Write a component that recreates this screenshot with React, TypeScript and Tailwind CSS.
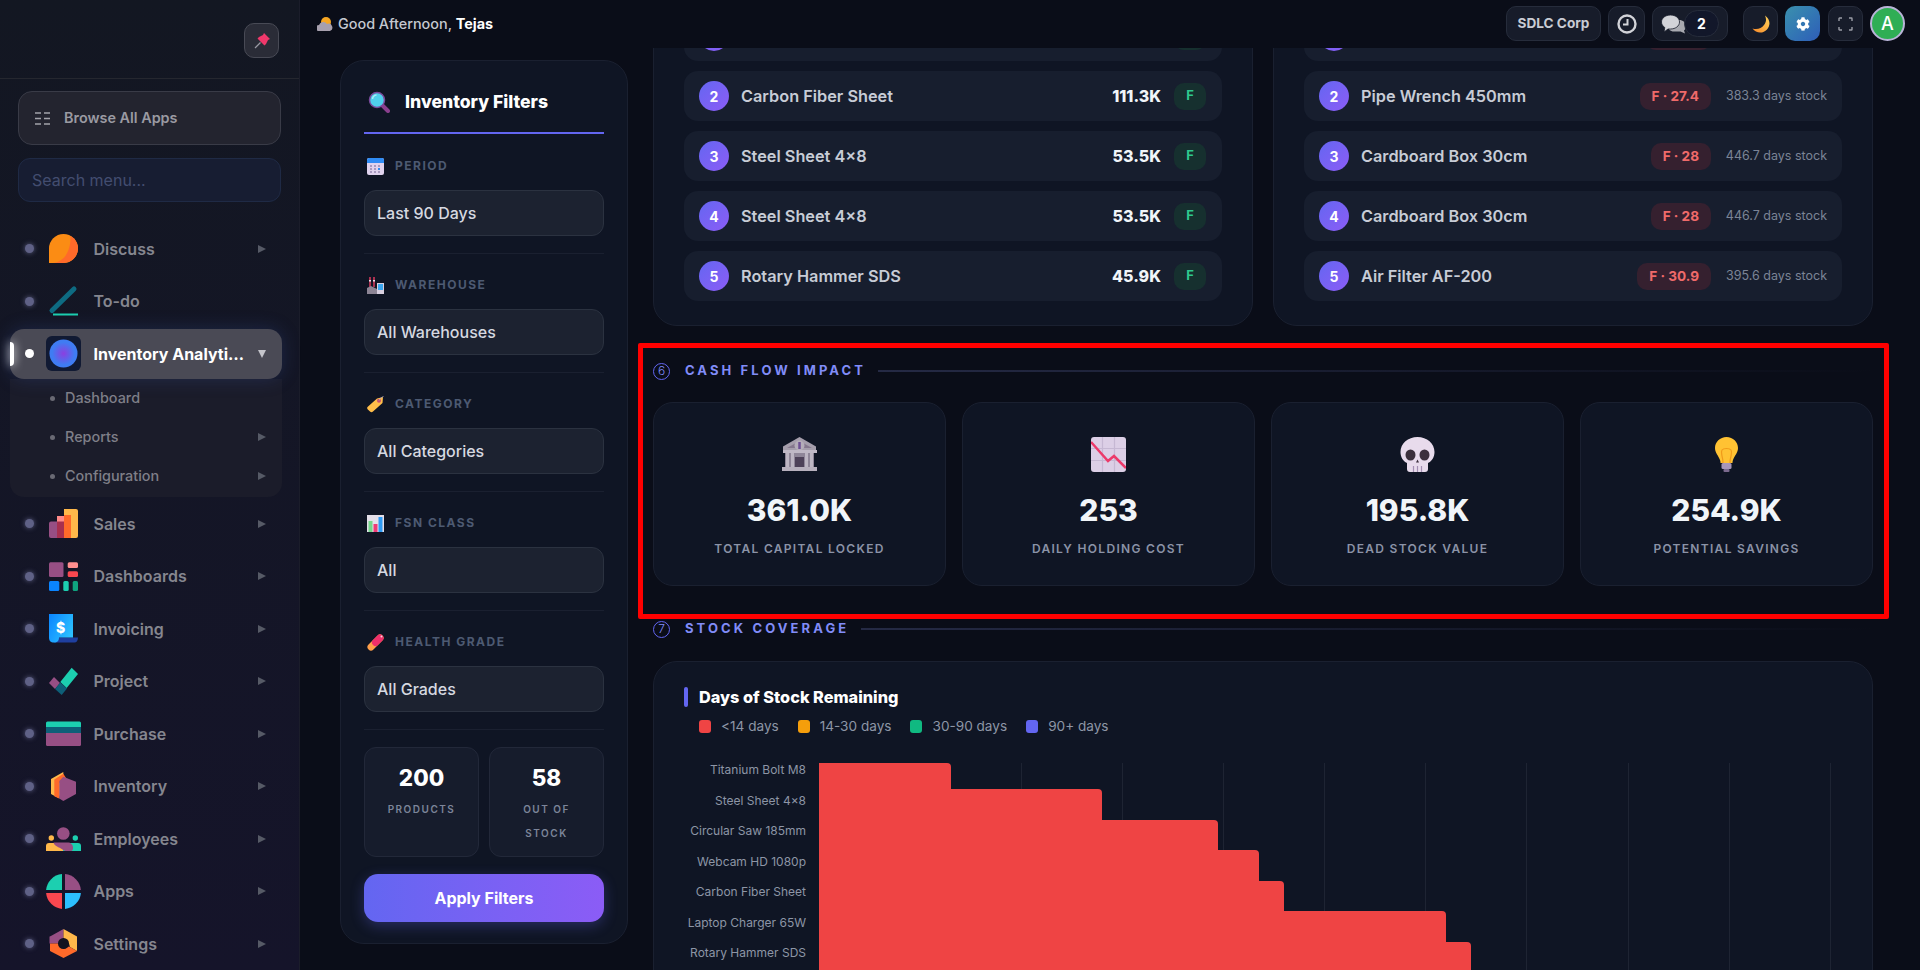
import { ReactNode } from 'react';
import { FaCog } from 'react-icons/fa';

const Svg = ({ s = 35, w, children }: { s?: number; w?: number; children: ReactNode }) => (
  <svg width={w ?? s} height={s} viewBox={`0 0 ${w ?? s} ${s}`} className="shrink-0">
    {children}
  </svg>
);

// app icons, all on a 35 box
const DiscussIcon = () => (
  <Svg>
    <path d="M3 32V17.5A14.5 14.5 0 1 1 17.5 32Z" fill="#fb8c14" />
    <path d="M24.500 4.800A14.5 14.5 0 0 1 17.500 32H7C17 31 25 22 24.500 4.800Z" fill="#ff6a2a" />
  </Svg>
);
const TodoIcon = () => (
  <Svg>
    <path d="M28 5 6 26.500" stroke="#0e6b82" strokeWidth="5" strokeLinecap="round" />
    <path d="M7 30.500H32" stroke="#1ccfb0" strokeWidth="2" />
  </Svg>
);
const AnalyticsIcon = () => (
  <Svg>
    <defs>
      <radialGradient id="ana">
        <stop offset="0" stopColor="#8b3fe0" />
        <stop offset="0.8" stopColor="#3f7cf3" />
      </radialGradient>
    </defs>
    <rect width="35" height="35" rx="6" fill="#111a33" />
    <circle cx="17.500" cy="17.500" r="14" fill="url(#ana)" />
  </Svg>
);
const SalesIcon = () => (
  <Svg>
    <path d="M3 17.500a2 2 0 0 1 2-2h6v16.500H5a2 2 0 0 1-2-2Z" fill="#974f84" />
    <path d="M11 10h7v22h-7Z" fill="#ff8a8a" />
    <path d="M11 15.500h7V32h-7Z" fill="#a8304f" />
    <path d="M18 3h12a2 2 0 0 1 2 2v25a2 2 0 0 1-2 2H18Z" fill="#ffb84a" />
    <path d="M18 9h7v23h-7Z" fill="#ff6a2a" />
  </Svg>
);
const DashboardsIcon = () => (
  <Svg>
    <rect x="3" y="3.300" width="14.500" height="14.700" rx="1.500" fill="#974f84" />
    <rect x="21.700" y="3.300" width="10.300" height="5.700" rx="1.500" fill="#ff8f8f" />
    <rect x="21.700" y="12.300" width="10.300" height="5.700" rx="1.500" fill="#f9474f" />
    <rect x="3" y="22" width="10.300" height="10" rx="1.500" fill="#0a84ff" />
    <rect x="17.300" y="22" width="5.400" height="10" rx="1.500" fill="#1ccfb0" />
    <rect x="26.700" y="22" width="5.300" height="10" rx="1.500" fill="#0fa37f" />
  </Svg>
);
const InvoicingIcon = () => (
  <Svg>
    <defs>
      <linearGradient id="inv" x1="0" y1="0" x2="1" y2="0.600">
        <stop offset="0" stopColor="#0a84ff" />
        <stop offset="1" stopColor="#2cc0ff" />
      </linearGradient>
    </defs>
    <path d="M10 26.500H32c0 3-1.500 5-3.500 5H8Z" fill="#1f3f9f" />
    <path d="M3 3h24v23.500H13c0 3-1.500 5-5 5s-5-2-5-5Z" fill="url(#inv)" />
    <text x="14.500" y="21.500" textAnchor="middle" fontSize="14" fontWeight="800" fill="#fff" fontFamily="Inter, sans-serif">
      $
    </text>
  </Svg>
);
const ProjectIcon = () => (
  <Svg>
    <polygon points="3,19 8,13 14,19 9,25" fill="#974f84" />
    <polygon points="25.700,3.800 32,10 20.600,24 14.300,18" fill="#1ccfb0" />
    <polygon points="14.300,18.500 21,24.500 15.700,31 9,25" fill="#0e5f78" />
  </Svg>
);
const PurchaseIcon = () => (
  <Svg>
    <path d="M0 7a1.500 1.500 0 0 1 1.500-1.500h32A1.500 1.500 0 0 1 35 7v4H0Z" fill="#1ccfb0" />
    <rect y="11" width="35" height="6" fill="#0e5f78" />
    <path d="M0 17h35v11.500a1.500 1.500 0 0 1-1.500 1.500h-32A1.500 1.500 0 0 1 0 28.500Z" fill="#974f84" />
  </Svg>
);
const InventoryIcon = () => (
  <Svg>
    <polygon points="17.300,3 5,10 5,25 13.300,29.500 17.300,8" fill="#ffb84a" />
    <polygon points="17.300,4.800 8.300,10.500 8.300,27.200 13.300,29.500 13.300,14 20,9" fill="#ff6a2a" />
    <polygon points="17.300,7.800 30,12.800 30,25 17.300,32 13.300,29.500 13.300,12" fill="#974f84" />
  </Svg>
);
const EmployeesIcon = () => (
  <Svg>
    <circle cx="17.300" cy="12.500" r="6.300" fill="#974f84" />
    <circle cx="5.300" cy="17" r="2.700" fill="#ffb84a" />
    <circle cx="29.300" cy="17" r="2.700" fill="#1ccfb0" />
    <path d="M0 30v-5a3 3 0 0 1 3-3h15v8Z" fill="#ffb84a" />
    <path d="M35 30v-5a3 3 0 0 0-3-3H17v8Z" fill="#1ccfb0" />
    <path d="M7.500 21.500h15c2 0 4 1.500 4.500 4.500 .3 2-.5 4-2 4H20c-2 0-3.500-2-6-3-2-1-6-2.500-6.500-5.500Z" fill="#974f84" />
  </Svg>
);
const AppsIcon = () => (
  <Svg>
    <path d="M16 0.100V16H0.100A17.500 17.500 0 0 1 16 0.100Z" fill="#1ccfb0" />
    <path d="M19 0.100A17.500 17.500 0 0 1 34.900 16H19Z" fill="#974f84" />
    <path d="M16 19V34.900A17.500 17.500 0 0 1 0.100 19Z" fill="#f9474f" />
    <path d="M19 19H34.900A17.500 17.500 0 0 1 19 34.900Z" fill="#2cc0ff" />
  </Svg>
);
const SettingsIcon = () => (
  <Svg>
    <path d="M17.500 3 4 10.500V17.500H12L17.500 12Z" fill="#974f84" />
    <path d="M17.500 3 31 10.500V25L24 21 23 17.500 17.500 12Z" fill="#ffb84a" />
    <path d="M4 17.500V25L17.500 32 31 25 23 20.500 17.500 23 12 17.500Z" fill="#ff6a2a" />
    <path d="M4 17.500V10.500" stroke="#974f84" />
    <circle cx="17.500" cy="17.500" r="5.500" fill="#12121f" />
  </Svg>
);

// small emoji-like drawings
const Magnifier = () => (
  <Svg s={22}>
    <path d="M14 14 20 20" stroke="#8a3f8e" strokeWidth="4" strokeLinecap="round" />
    <circle cx="9" cy="9" r="7.500" fill="#4fd0ec" stroke="#7a4a9c" strokeWidth="1.500" />
    <path d="M4.500 8a4.500 4.500 0 0 1 4-4" stroke="#a9ecf8" strokeWidth="1.500" fill="none" />
  </Svg>
);
const Calendar = () => (
  <Svg s={17}>
    <rect width="17" height="17" rx="2" fill="#e0d3ee" />
    <path d="M0 5V2a2 2 0 0 1 2-2h13a2 2 0 0 1 2 2v3Z" fill="#2f8cf5" />
    {[3, 7, 11].map(x => [7, 10, 13].map(y => <rect key={`${x}${y}`} x={x} y={y} width="2" height="2" fill={x === 11 && y === 10 ? '#2f8cf5' : '#a99ac0'} />))}
  </Svg>
);
const Factory = () => (
  <Svg s={17}>
    <path d="M2 0h2v10H2ZM6 0h2v10H6Z" fill="#a8304f" />
    <path d="M2 3h2v1.500H2ZM6 3h2v1.500H6Z" fill="#e8dce8" />
    <path d="M0 17v-6l4-2 4 2 2 1v5Z" fill="#8c8494" />
    <rect x="10" y="6" width="7" height="11" fill="#d8d0e0" />
    <rect x="11" y="7" width="5" height="6" fill="#39a6ef" />
  </Svg>
);
const Tag = () => (
  <Svg s={17}>
    <path d="M.5 11 10 2.500l6-1.500-.5 6L6 15.500c-1 1-2 1-3 0L.8 13.500c-.8-.8-.8-1.800-.3-2.500Z" fill="#ffbd4a" />
    <circle cx="12" cy="4.800" r="2" fill="#c8506f" />
    <path d="M12 4.500C13 2 15 1 16.500 .5" stroke="#b0a8c0" strokeWidth=".8" fill="none" />
  </Svg>
);
const BarChart = () => (
  <Svg s={17}>
    <rect width="17" height="17" fill="#e4dfe9" />
    <rect x="1.500" y="6" width="4" height="11" fill="#74d68a" />
    <rect x="6.500" y="9" width="4" height="8" fill="#ef3a76" />
    <rect x="11.500" y="2" width="4" height="15" fill="#2f9cf5" />
  </Svg>
);
const Pill = () => (
  <Svg s={17}>
    <path d="M4 13 13 4" stroke="#ff9f4a" strokeWidth="7" strokeLinecap="round" />
    <path d="M8.500 8.500 13 4" stroke="#ef2f6b" strokeWidth="7" strokeLinecap="round" />
    <circle cx="14.500" cy="2.500" r="1" fill="#ffd0dc" />
  </Svg>
);
const Bank = () => (
  <Svg>
    <path d="M17.500 0 34 9.500V13H1V9.500Z" fill="#a59eac" />
    <path d="M17.500 4 30 11H5Z" fill="#85788e" />
    <circle cx="17.500" cy="8.500" r="5" fill="#b4adb9" />
    <path d="M17.500 5v7" stroke="#6d4f94" strokeWidth="2.500" />
    <rect x="1" y="13" width="34" height="3" fill="#c0b9c6" />
    <rect x="3" y="16" width="29" height="14" fill="#8f8698" />
    {[4, 9, 23, 28].map(x => (
      <rect key={x} x={x} y="16" width="3" height="14" fill="#bdb6c3" />
    ))}
    <rect x="13" y="20" width="9" height="10" fill="#4e4259" />
    <rect y="30" width="35" height="4" fill="#b7b0bd" />
  </Svg>
);
const ChartDown = () => (
  <Svg>
    <rect width="35" height="35" rx="3" fill="#dccfe6" />
    <path d="M0 11.500H35M0 23.500H35M11.500 0V35M23.500 0V35" stroke="#c6b8d3" strokeWidth="1.200" />
    <path d="M0 5 17 24 23 19 35 31" stroke="#ec3a6a" strokeWidth="2.500" fill="none" />
  </Svg>
);
const Skull = () => (
  <Svg>
    <path d="M17.500 0C27 0 34.500 6.500 34.500 15c0 5-2.500 9-6.500 11v6a3 3 0 0 1-3 3H10a3 3 0 0 1-3-3v-6C3 24 .5 20 .5 15 .5 6.500 8 0 17.500 0Z" fill="#e8dbec" />
    <ellipse cx="10.500" cy="18" rx="5" ry="5.500" fill="#3b2f3c" />
    <ellipse cx="24.500" cy="18" rx="5" ry="5.500" fill="#3b2f3c" />
    <path d="M16 25.500h3l-1.500-3Z" fill="#3b2f3c" />
    <path d="M13.500 29v6M17.500 29v6M21.500 29v6" stroke="#a590b4" strokeWidth="1.200" />
  </Svg>
);
const Bulb = () => (
  <Svg s={35} w={23}>
    <path d="M11.500 0C18 0 23 5 23 11c0 5-3.500 7.500-5 12-.5 1.500-.5 3-.5 3h-12s0-1.500-.5-3C3.500 18.500 0 16 0 11 0 5 5 0 11.500 0Z" fill="#ffc233" />
    <path d="M8 26c0-7-3-10-1-13 1.500-2 7.500-2 9 0 2 3-1 6-1 13" fill="none" stroke="#f09a1a" strokeWidth="1.200" />
    <rect x="6.500" y="26" width="10" height="6" rx="1.500" fill="#a796b8" />
    <rect x="8.500" y="32" width="6" height="3" rx="1" fill="#7b6a8e" />
  </Svg>
);
const Pin = () => (
  <Svg s={16}>
    <path d="M1 15 6.500 9.500" stroke="#9a9aa4" strokeWidth="1.200" />
    <path d="M10 0 16 6l-2 1-2 4-1.500 1.500-7-7L5 4l4-2Z" fill="#f0386b" />
  </Svg>
);
const Greeting = () => (
  <Svg s={16}>
    <circle cx="9" cy="6" r="5" fill="#f6a623" />
    <path d="M2 15a3 3 0 0 1 0-6 4.500 4.500 0 0 1 8-1 3.500 3.500 0 0 1 3 7Z" fill="#a7a0ae" />
  </Svg>
);
const Chat = () => (
  <Svg s={20} w={25}>
    <path d="M11 6h7c4 0 7 2.500 7 6 0 2-1 3.500-2 4.500l1 3-4.500-2H13c-4 0-6-2.500-6-5.500Z" fill="#a8a9b0" />
    <path d="M9.500 1c5 0 9 3 9 7s-4 7-9 7H7l-4 3 .8-4.500C1.500 12 .5 10 .5 8c0-4 4-7 9-7Z" fill="#d2d3d8" stroke="#171c2a" strokeWidth=".8" />
  </Svg>
);
const Moon = () => (
  <Svg s={18}>
    <defs>
      <linearGradient id="moon" x1="0" y1="1" x2="1" y2="0">
        <stop offset="0" stopColor="#f6882a" />
        <stop offset="1" stopColor="#ffd35a" />
      </linearGradient>
    </defs>
    <path d="M13 .5C18 4 19 10 15 14.500S4 18.500 .5 13.500C5 15 9.500 13.500 12 10S14.500 4 13 .5Z" fill="url(#moon)" />
  </Svg>
);

const menu = [
  { label: 'Discuss', icon: <DiscussIcon /> },
  { label: 'To-do', icon: <TodoIcon />, noArrow: true },
];
const menuRest = [
  { label: 'Sales', icon: <SalesIcon /> },
  { label: 'Dashboards', icon: <DashboardsIcon /> },
  { label: 'Invoicing', icon: <InvoicingIcon /> },
  { label: 'Project', icon: <ProjectIcon /> },
  { label: 'Purchase', icon: <PurchaseIcon /> },
  { label: 'Inventory', icon: <InventoryIcon /> },
  { label: 'Employees', icon: <EmployeesIcon /> },
  { label: 'Apps', icon: <AppsIcon /> },
  { label: 'Settings', icon: <SettingsIcon /> },
];

const Arrow = ({ color = '#565a66' }: { color?: string }) => (
  <svg width="8" height="8" viewBox="0 0 8 8">
    <path d="M0 0 8 4 0 8Z" fill={color} />
  </svg>
);

const MenuItem = ({ label, icon, noArrow }: { label: string; icon: ReactNode; noArrow?: boolean }) => (
  <div className="flex h-[52.500px] items-center pl-[25px] pr-[33px]">
    <span className="h-[9px] w-[9px] rounded-full bg-[#5f6186] shadow-[0_0_5px_#5f6186]" />
    <span className="ml-3 flex w-[35px] justify-center">{icon}</span>
    <span className="ml-[12.500px] flex-1 text-[16px] font-semibold text-[#85868f]">{label}</span>
    {!noArrow && <Arrow />}
  </div>
);

const Sidebar = () => (
  <aside className="flex w-[300px] shrink-0 flex-col border-r border-[#1b1d2a] bg-gradient-to-b from-[#131722] to-[#15142a]">
    <div className="flex h-[79px] shrink-0 justify-end border-b border-[#25272f] pr-5 pt-[23px]">
      <button className="flex h-[35px] w-[35px] items-center justify-center rounded-[10px] border border-[#484a55] bg-[#2a2c37]">
        <Pin />
      </button>
    </div>
    <div className="mx-[18px] mt-3 flex h-[55px] items-center rounded-[14px] border border-[#393b47] bg-[#23242f] pl-[16px]">
      <svg width="15" height="13" viewBox="0 0 15 13" stroke="#a3a3ab" strokeWidth="1.400">
        <path d="M0 1H6M9 1H15M0 6.500H6M9 6.500H15M0 12H6M9 12H15" />
      </svg>
      <span className="ml-[14px] text-[14.400px] font-semibold text-[#9a9aa2]">Browse All Apps</span>
    </div>
    <input
      placeholder="Search menu..."
      className="mx-[18px] mt-[13px] h-[44px] rounded-[12px] border border-[#1f2a45] bg-[#171d32] pl-[13px] text-[16px] text-[#8a93ad] outline-none placeholder:text-[#434d70]"
    />
    <div className="mt-[21px]">
      {menu.map(m => (
        <MenuItem key={m.label} label={m.label} icon={m.icon} noArrow={m.noArrow} />
      ))}
    </div>
    <div className="mx-[10px] mt-[1px] w-[272px]">
      <div className="relative flex h-[50px] items-center rounded-[14px] bg-[#4a4a55] pl-[15px] pr-[16px] shadow-[0_0_18px_rgba(60,90,180,0.25)]">
        <span className="absolute left-0 top-[13px] h-6 w-1 rounded-r bg-white shadow-[0_0_10px_#ffffff]" />
        <span className="h-[9px] w-[9px] rounded-full bg-white" />
        <span className="ml-3">
          <AnalyticsIcon />
        </span>
        <span className="ml-[12.500px] w-[151.500px] truncate text-[16px] font-bold text-white">Inventory Analytics</span>
        <svg width="8" height="8" viewBox="0 0 8 8" className="ml-auto">
          <path d="M0 0H8L4 8Z" fill="#c4c4ca" />
        </svg>
      </div>
      <div className="flex flex-col rounded-b-[14px] bg-[#1b1c2a] pb-[1px] pr-4 pl-10">
        {['Dashboard', 'Reports', 'Configuration'].map((s, i) => (
          <div key={s} className="flex h-[39px] items-center">
            <span className="h-[5px] w-[5px] rounded-full bg-[#6a6a74]" />
            <span className="ml-[10px] flex-1 text-[14.400px] font-medium text-[#7f7f88]">{s}</span>
            {i > 0 && <Arrow />}
          </div>
        ))}
      </div>
    </div>
    <div className="mt-[1px]">
      {menuRest.map(m => (
        <MenuItem key={m.label} label={m.label} icon={m.icon} />
      ))}
    </div>
  </aside>
);

const TopBtn = ({ className = '', children }: { className?: string; children: ReactNode }) => (
  <div className={`flex h-[35px] items-center justify-center rounded-[10px] border border-[#262c3b] bg-[#171c2a] ${className}`}>{children}</div>
);

const Topbar = () => (
  <header className="flex h-12 shrink-0 items-center bg-[#0a0d18] pb-[1px] pl-[17px] pr-[15px]">
    <Greeting />
    <span className="ml-[5px] text-[14.400px] font-medium text-[#c5c8d0]">
      Good Afternoon, <b className="font-bold text-white">Tejas</b>
    </span>
    <div className="ml-auto flex items-center">
      <TopBtn className="w-[95px] text-[13.600px] font-bold text-[#c9ccd4]">SDLC Corp</TopBtn>
      <TopBtn className="ml-[7px] w-[37px]">
        <svg width="20" height="20" viewBox="0 0 20 20" fill="none" stroke="#d2d3d8" strokeWidth="2.400">
          <circle cx="10" cy="10" r="8.500" />
          <path d="M10.500 5V10.500H6" strokeWidth="2" />
        </svg>
      </TopBtn>
      <TopBtn className="ml-[7px] w-[76px] justify-start pl-2">
        <Chat />
        <span className="-ml-[2px] flex h-[27px] w-[35px] items-center justify-center rounded-full border border-[#262c3b] bg-[#12172a] text-[14px] font-bold text-white">2</span>
      </TopBtn>
      <TopBtn className="ml-[15px] w-[35px]">
        <Moon />
      </TopBtn>
      <div className="ml-[7px] flex h-[35px] w-[35px] items-center justify-center rounded-[10px] bg-gradient-to-br from-[#3b90ad] to-[#2f5db8]">
        <FaCog className="h-[14px] w-[14px] text-white" />
      </div>
      <TopBtn className="ml-2 w-[35px]">
        <svg width="15" height="14" viewBox="0 0 15 14" fill="none" stroke="#9a9ca6" strokeWidth="1.400">
          <path d="M1 4V1.500A.5.5 0 0 1 1.500 1H4M11 1H13.500A.5.5 0 0 1 14 1.500V4M14 10V12.500A.5.5 0 0 1 13.500 13H11M4 13H1.500A.5.5 0 0 1 1 12.500V10" />
        </svg>
      </TopBtn>
      <div className="ml-[7px] flex h-[35px] w-[35px] items-center justify-center rounded-full border-2 border-[#b9b4d8] bg-[#2fae55] text-[18px] font-medium text-white">A</div>
    </div>
  </header>
);

const filters = [
  { label: 'Period', value: 'Last 90 Days', icon: <Calendar /> },
  { label: 'Warehouse', value: 'All Warehouses', icon: <Factory /> },
  { label: 'Category', value: 'All Categories', icon: <Tag /> },
  { label: 'FSN Class', value: 'All', icon: <BarChart /> },
  { label: 'Health Grade', value: 'All Grades', icon: <Pill /> },
];

const FilterPanel = () => (
  <div className="ml-10 mt-3 h-[884px] w-[288px] shrink-0 rounded-[24px] border border-[#1a2030] bg-[#0f1524] px-[23px]">
    <div className="flex h-[73px] items-center border-b-2 border-[#6366f1] pl-1 pt-[11px]">
      <Magnifier />
      <span className="ml-[15px] text-[17.600px] font-extrabold text-white">Inventory Filters</span>
    </div>
    <div className="mt-px">
      {filters.map(f => (
        <div key={f.label} className="border-b border-[#1a2030] pb-[17px] pt-[23px]">
          <div className="flex h-4 items-center pl-[3px]">
            {f.icon}
            <span className="ml-[11px] text-[12px] font-bold uppercase tracking-[1.500px] text-[#4d5a72]">{f.label}</span>
          </div>
          <div className="mt-4 flex h-[46px] items-center rounded-[12px] border border-[#2b3240] bg-[#1c2230] pl-3 text-[16px] font-medium text-[#d6d9e0]">{f.value}</div>
        </div>
      ))}
    </div>
    <div className="mt-[17px] grid grid-cols-2 gap-[10px]">
      {[
        { n: '200', l: 'Products' },
        { n: '58', l: 'Out of Stock' },
      ].map(s => (
        <div key={s.l} className="h-[110px] rounded-[12px] border border-[#222839] bg-[#161c2c] px-5 pt-[14px] text-center">
          <div className="text-[22.400px] font-extrabold leading-[32px] text-white">{s.n}</div>
          <div className="mt-[3px] text-[10px] font-semibold uppercase leading-[24px] tracking-[1.500px] text-[#7c8599]">{s.l}</div>
        </div>
      ))}
    </div>
    <button className="mt-[17px] h-[48px] w-full rounded-[14px] bg-gradient-to-r from-[#6366f1] to-[#8b5cf6] text-[16px] font-bold text-white shadow-[0_4px_14px_rgba(99,102,241,0.3)]">
      Apply Filters
    </button>
  </div>
);

// the first row of each list sits under the top bar, only its lower edge shows
const topMoving = [
  { name: '', value: '' },
  { name: 'Carbon Fiber Sheet', value: '111.3K' },
  { name: 'Steel Sheet 4×8', value: '53.5K' },
  { name: 'Steel Sheet 4×8', value: '53.5K' },
  { name: 'Rotary Hammer SDS', value: '45.9K' },
];
const overstock = [
  { name: '', badge: '', days: '' },
  { name: 'Pipe Wrench 450mm', badge: 'F · 27.4', days: '383.3 days stock' },
  { name: 'Cardboard Box 30cm', badge: 'F · 28', days: '446.7 days stock' },
  { name: 'Cardboard Box 30cm', badge: 'F · 28', days: '446.7 days stock' },
  { name: 'Air Filter AF-200', badge: 'F · 30.9', days: '395.6 days stock' },
];

const RankRow = ({ rank, name, children }: { rank: number; name: string; children: ReactNode }) => (
  <div className="flex h-[50px] items-center rounded-[14px] bg-[#171e2e] pl-[15px] pr-4">
    <span className="flex h-[30px] w-[30px] shrink-0 items-center justify-center rounded-full bg-gradient-to-br from-[#6366f1] to-[#8b5cf6] text-[14px] font-bold text-white">{rank > 1 ? rank : ''}</span>
    <span className="ml-3 flex-1 text-[16.300px] font-semibold text-[#c7ccd6]">{name}</span>
    {children}
  </div>
);

const ListCard = ({ children }: { children: ReactNode }) => (
  <div className="flex flex-col gap-[10px] rounded-[24px] border border-[#1a2030] bg-[#0f1524] px-[30px] pb-6 pt-6">{children}</div>
);

const SectionHead = ({ num, title, className }: { num: string; title: string; className: string }) => (
  <div className={`flex h-5 items-center ${className}`}>
    <span className="flex h-[17px] w-[17px] items-center justify-center rounded-full border border-[#6366f1] text-[12px] font-light text-[#818cf8]">{num}</span>
    <span className="ml-[15px] text-[13px] font-bold uppercase tracking-[3.100px] text-[#818cf8]">{title}</span>
    <span className="ml-3 h-[2px] flex-1 bg-gradient-to-r from-[#252a45] to-transparent" />
  </div>
);

const cash = [
  { icon: <Bank />, value: '361.0K', label: 'Total Capital Locked' },
  { icon: <ChartDown />, value: '253', label: 'Daily Holding Cost' },
  { icon: <Skull />, value: '195.8K', label: 'Dead Stock Value' },
  { icon: <Bulb />, value: '254.9K', label: 'Potential Savings' },
];

const legend = [
  { label: '<14 days', swatch: 'bg-[#ef4444]' },
  { label: '14-30 days', swatch: 'bg-[#f59e0b]' },
  { label: '30-90 days', swatch: 'bg-[#10b981]' },
  { label: '90+ days', swatch: 'bg-[#6366f1]' },
];

// x of each bar's right end and y of its top, in chart coordinates (chart starts at 684,763)
const bars = [
  { label: 'Titanium Bolt M8', end: 951, top: 0, h: 27, ly: 7.500 },
  { label: 'Steel Sheet 4x8', end: 1102, top: 26, h: 31, ly: 38.500 },
  { label: 'Circular Saw 185mm', end: 1218, top: 57, h: 31, ly: 68.500 },
  { label: 'Webcam HD 1080p', end: 1259, top: 87, h: 31, ly: 99.500 },
  { label: 'Carbon Fiber Sheet', end: 1284, top: 118, h: 31, ly: 129.500 },
  { label: 'Laptop Charger 65W', end: 1446, top: 148, h: 31, ly: 160.500 },
  { label: 'Rotary Hammer SDS', end: 1471, top: 179, h: 40, ly: 190.500 },
];
const grid = [920, 1021, 1122, 1223, 1324, 1425, 1526, 1628, 1729, 1830];

const CoverageChart = () => (
  <svg width="1188" height="215" viewBox="0 0 1188 215" className="mt-[27px] block">
    {grid.map(x => (
      <line key={x} x1={x - 684 + 0.5} x2={x - 684 + 0.5} y1="0" y2="215" stroke="#1e2433" />
    ))}
    {bars.map(b => {
      const x0 = 135;
      const x1 = b.end - 684;
      return (
        <g key={b.label}>
          <path d={`M${x0} ${b.top}H${x1 - 4}Q${x1} ${b.top} ${x1} ${b.top + 4}V${b.top + b.h}H${x0}Z`} fill="#ef4444" />
          <text x="122" y={b.ly} textAnchor="end" dominantBaseline="middle" fontSize="12" fill="#8d95a6" fontFamily="Inter, sans-serif">
            {b.label}
          </text>
        </g>
      );
    })}
  </svg>
);

export default function App() {
  return (
    <div className="relative flex h-screen w-full overflow-hidden bg-[#0a0d18] font-['Inter',sans-serif]">
      <Sidebar />
      <div className="flex min-w-0 flex-1 flex-col">
        <Topbar />
        <div className="flex min-h-0 flex-1 overflow-hidden">
          <FilterPanel />
          <main className="ml-[25px] w-[1220px] shrink-0 -mt-[62px]">
            <div className="grid grid-cols-2 gap-5">
              <ListCard>
                {topMoving.map((r, i) => (
                  <RankRow key={i} rank={i + 1} name={r.name}>
                    <span className="text-[16px] font-extrabold text-[#f1f5f9]">{r.value}</span>
                    <span className="ml-[13px] flex h-[27px] w-[32px] items-center justify-center rounded-[10px] bg-[#16302f] text-[13px] font-bold text-[#2ec98f]">{r.value && 'F'}</span>
                  </RankRow>
                ))}
              </ListCard>
              <ListCard>
                {overstock.map((r, i) => (
                  <RankRow key={i} rank={i + 1} name={r.name}>
                    <span className={`flex h-[27px] items-center rounded-[10px] bg-[#35202f] px-3 text-[13.600px] font-bold text-[#ef6a6a] ${r.badge ? '' : 'w-[65px]'}`}>{r.badge}</span>
                    <span className="-mr-[1px] ml-[14px] w-[102px] text-right text-[12.500px] text-[#7b8496]">{r.days}</span>
                  </RankRow>
                ))}
              </ListCard>
            </div>

            <SectionHead num="6" title="Cash Flow Impact" className="mb-[21px] mt-[35px]" />
            <div className="grid grid-cols-4 gap-4">
              {cash.map(c => (
                <div key={c.label} className="flex h-[184px] flex-col items-center rounded-[20px] border border-[#1a2030] bg-[#0f1524] pt-[34px]">
                  <div className="flex h-[35px] items-center">{c.icon}</div>
                  <div className="mt-[18px] text-[30px] font-extrabold leading-[40px] text-[#f1f5f9]">{c.value}</div>
                  <div className="mt-[11px] text-[12px] font-semibold uppercase leading-4 tracking-[1.300px] text-[#8b93a7]">{c.label}</div>
                </div>
              ))}
            </div>

            <SectionHead num="7" title="Stock Coverage" className="mb-[22px] mt-[33px]" />
            <div className="rounded-t-[24px] border border-[#1a2030] bg-[#0f1524] px-[30px] pt-[25px]">
              <div className="flex h-5 items-center">
                <span className="h-5 w-1 rounded-full bg-[#6366f1]" />
                <span className="ml-[11px] text-[16.300px] font-extrabold text-white">Days of Stock Remaining</span>
              </div>
              <div className="mt-[9px] flex h-5 items-center pl-[15px]">
                {legend.map(l => (
                  <span key={l.label} className="mr-[19px] flex items-center text-[13.600px] text-[#8d95a6]">
                    <span className={`mr-[10px] h-[13px] w-[12px] rounded-[3px] ${l.swatch}`} />
                    {l.label}
                  </span>
                ))}
              </div>
              <CoverageChart />
            </div>
          </main>
        </div>
      </div>
      {/* annotation frame from the screenshot */}
      <div className="pointer-events-none absolute left-[638px] top-[343px] h-[276px] w-[1251px] rounded-[2px] border-[5px] border-[#ff0000]" />
    </div>
  );
}
